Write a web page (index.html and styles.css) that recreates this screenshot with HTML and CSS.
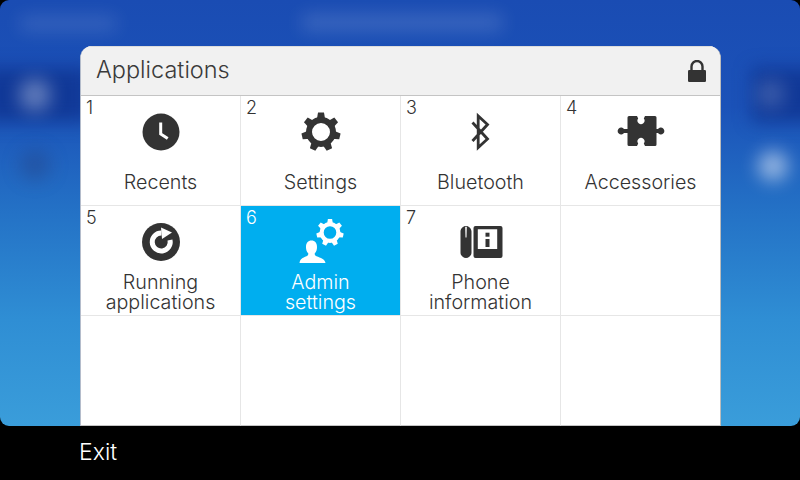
FILE: index.html
```html
<!DOCTYPE html>
<html lang="en">
<head>
<meta charset="utf-8">
<title>Applications</title>
<link rel="stylesheet" href="styles.css">
</head>
<body>
<svg class="defs" width="0" height="0" aria-hidden="true">
  <defs>
    <g id="tooth"><polygon points="-4.400,-11 4.400,-11 3,-19.400 -3,-19.400"/></g>
    <g id="gear">
      <use href="#tooth"/>
      <use href="#tooth" transform="rotate(51.43)"/>
      <use href="#tooth" transform="rotate(102.86)"/>
      <use href="#tooth" transform="rotate(154.29)"/>
      <use href="#tooth" transform="rotate(205.71)"/>
      <use href="#tooth" transform="rotate(257.14)"/>
      <use href="#tooth" transform="rotate(308.57)"/>
      <circle r="12" fill="none" stroke="currentColor" stroke-width="6"/>
    </g>
  </defs>
</svg>
<div class="screen">
  <main class="wallpaper">
    <div class="blur blur-title-a"></div>
    <div class="blur blur-title-b"></div>
    <div class="blur blur-band-l"></div>
    <div class="blur blur-band-r"></div>
    <div class="blur blur-dot-a"></div>
    <div class="blur blur-dot-b"></div>
    <div class="blur blur-dot-c"></div>
    <div class="blur blur-dot-d"></div>

    <section class="dialog">
      <header class="dialog-head">
        <h1 class="dialog-title">Applications</h1>
        <svg class="lock" viewBox="0 0 18 22" width="18" height="22" aria-hidden="true">
          <path d="M3.500 11V6.500a5.500 5.500 0 0 1 11 0V11" fill="none" stroke="currentColor" stroke-width="2.400"/>
          <rect x="0" y="10" width="18" height="12" rx="1.200" fill="currentColor"/>
        </svg>
      </header>
      <div class="grid">
        <div class="cell">
          <span class="num">1</span>
          <svg class="icon" viewBox="0 -4 48 48" aria-hidden="true">
            <circle cx="24" cy="20" r="18.500" fill="currentColor"/>
            <path d="M23.700 10.500V22l7 4.600" fill="none" stroke="#fff" stroke-width="3"/>
          </svg>
          <div class="label">Recents</div>
        </div>
        <div class="cell">
          <span class="num">2</span>
          <svg class="icon" viewBox="0 -4 48 48" aria-hidden="true">
            <use href="#gear" transform="translate(24 20)" fill="currentColor"/>
          </svg>
          <div class="label">Settings</div>
        </div>
        <div class="cell">
          <span class="num">3</span>
          <svg class="icon" viewBox="0 -4 48 48" aria-hidden="true">
            <path d="M15.500 10.500 30.500 27l-9.300 8.500V4l9.300 8.500L15.500 29" fill="none" stroke="currentColor" stroke-width="2.800"/>
          </svg>
          <div class="label">Bluetooth</div>
        </div>
        <div class="cell">
          <span class="num">4</span>
          <svg class="icon" viewBox="0 -4 48 48" aria-hidden="true">
            <path fill="currentColor" d="M12 4H20L21.200 6.500A3.500 3.500 0 1 0 26.800 6.500L28 4H38Q39.500 4 39.500 5.500V17H41A3.500 3.500 0 1 1 41 21H39.500V32.500Q39.500 34 38 34H28L26.800 31.500A3.500 3.500 0 1 0 21.200 31.500L20 34H12Q10.500 34 10.500 32.500V21H7A3.500 3.500 0 1 1 7 17H10.500V5.500Q10.500 4 12 4Z"/>
          </svg>
          <div class="label">Accessories</div>
        </div>
        <div class="cell">
          <span class="num">5</span>
          <svg class="icon" viewBox="0 -4 48 48" aria-hidden="true">
            <circle cx="24" cy="20" r="19" fill="currentColor"/>
            <path d="M24.500 11A9 9 0 1 0 33 18" fill="none" stroke="#fff" stroke-width="5"/>
            <polygon points="24,5.500 35,10.500 25,17" fill="#fff"/>
          </svg>
          <div class="label">Running<br>applications</div>
        </div>
        <div class="cell cell-active">
          <span class="num">6</span>
          <svg class="icon" viewBox="0 -4 48 48" aria-hidden="true">
            <use href="#gear" transform="translate(33 10.500) scale(.7)" fill="currentColor"/>
            <path fill="currentColor" d="M2.500 41C3 37 5.500 35.800 9.500 34.200 11 33.600 11.500 32.500 11.300 31.400 9.500 29.500 9 27.500 9 25 9 21 11 18.500 14.500 18.500S20 21 20 25C20 27.500 19.500 29.500 17.700 31.400 17.500 32.500 18 33.600 19.500 34.200 23.500 35.800 28 37 28.500 41Z"/>
          </svg>
          <div class="label">Admin<br>settings</div>
        </div>
        <div class="cell">
          <span class="num">7</span>
          <svg class="icon" viewBox="0 -4 48 48" aria-hidden="true">
            <path fill="currentColor" fill-rule="evenodd" d="M9 4C12 4 14.500 6.500 14.500 9.500V30.500C14.500 33.500 12 36 9 36S3.500 33.500 3.500 30.500V9.500C3.500 6.500 6 4 9 4ZM8.200 4.800 8.500 15.500H9.500L9.800 4.800Z"/>
            <path fill="currentColor" fill-rule="evenodd" d="M18.500 4H43.500Q45.500 4 45.500 6V34Q45.500 36 43.500 36H18.500Q16.500 36 16.500 34V6Q16.500 4 18.500 4ZM20.800 7.300V27H40.200V7.300Z"/>
            <rect x="28.500" y="10.700" width="4" height="4" fill="currentColor"/>
            <rect x="28.500" y="17" width="4" height="8" fill="currentColor"/>
          </svg>
          <div class="label">Phone<br>information</div>
        </div>
        <div class="cell"></div>
        <div class="cell cell-last"></div>
        <div class="cell cell-last"></div>
        <div class="cell cell-last"></div>
        <div class="cell cell-last"></div>
      </div>
    </section>
  </main>
  <footer class="softkeys">
    <span class="softkey">Exit</span>
  </footer>
</div>
</body>
</html>
```

FILE: styles.css
```css
* { box-sizing: border-box; }

html, body {
  margin: 0;
  padding: 0;
  background: #000;
}

body {
  width: 800px;
  height: 480px;
  overflow: hidden;
  font-family: "Inter", "Liberation Sans", sans-serif;
  font-weight: 300;
  color: #333;
}

.defs { position: absolute; }

.screen {
  display: flex;
  flex-direction: column;
  width: 800px;
  height: 480px;
}

.wallpaper {
  position: relative;
  flex: 0 0 426px;
  overflow: hidden;
  border-radius: 9px;
  background: linear-gradient(180deg, #1a4cb3 0%, #1b52b8 25%, #2472c6 50%, #2f8ed4 75%, #3a9dda 100%);
}

.blur {
  position: absolute;
  filter: blur(9px);
}

.blur-title-a {
  left: 20px; top: 17px; width: 96px; height: 13px;
  background: rgba(255, 255, 255, .14);
}

.blur-title-b {
  left: 302px; top: 15px; width: 200px; height: 15px;
  background: rgba(255, 255, 255, .16);
}

.blur-band-l {
  left: -20px; top: 68px; width: 110px; height: 54px;
  background: rgba(10, 40, 130, .6);
}

.blur-band-r {
  left: 752px; top: 68px; width: 70px; height: 54px;
  background: rgba(10, 40, 130, .6);
}

.blur-dot-a {
  left: 19px; top: 79px; width: 32px; height: 32px;
  border-radius: 50%;
  background: rgba(255, 255, 255, .34);
}

.blur-dot-b {
  left: 20px; top: 150px; width: 30px; height: 30px;
  border-radius: 50%;
  background: rgba(40, 60, 120, .38);
}

.blur-dot-c {
  left: 757px; top: 80px; width: 28px; height: 28px;
  border-radius: 50%;
  background: rgba(255, 255, 255, .18);
}

.blur-dot-d {
  left: 758px; top: 151px; width: 30px; height: 30px;
  border-radius: 50%;
  background: rgba(255, 255, 255, .52);
}

.dialog {
  position: relative;
  display: flex;
  flex-direction: column;
  width: 641px;
  height: 380px;
  margin: 46px 0 0 80px;
  border-left: 1px solid #b4bccb;
  border-right: 1px solid #bcbcbc;
  border-radius: 12px 12px 0 0;
  background: #fff;
  overflow: hidden;
}

.dialog-head {
  display: flex;
  flex: 0 0 50px;
  align-items: center;
  justify-content: space-between;
  padding: 0 14px 0 15px;
  background: #f1f1f1;
  border-bottom: 1px solid #c4c4c4;
  border-top: 1px solid #dcdcdc;
}

.dialog-title {
  margin: -3px 0 0;
  font-size: 23.500px;
  font-weight: 300;
  color: #3a3a3a;
}

.lock {
  color: #333;
}

.grid {
  display: grid;
  grid-template-columns: repeat(4, 160px);
  grid-template-rows: repeat(3, 110px);
  width: 640px;
}

.cell {
  position: relative;
  display: flex;
  flex-direction: column;
  align-items: center;
  padding-top: 12px;
  border-right: 1px solid #e6e6e6;
  border-bottom: 1px solid #e6e6e6;
  color: #333;
}

.cell-last { border-bottom-color: #c4c4c4; }

.cell-active {
  background: #00aeef;
  color: #fff;
}

.num {
  position: absolute;
  left: 5px;
  top: 2px;
  font-size: 18px;
  line-height: 20px;
}

.icon {
  display: block;
  width: 48px;
  height: 48px;
  flex: none;
}

.label {
  display: flex;
  flex: 1;
  align-items: center;
  margin-top: 3px;
  font-size: 19.700px;
  line-height: 20px;
  text-align: center;
}

.softkeys {
  display: flex;
  flex: 1;
  align-items: center;
  padding: 0 0 2px 79px;
  background: #000;
}

.softkey {
  color: #fff;
  font-size: 23px;
}
```
